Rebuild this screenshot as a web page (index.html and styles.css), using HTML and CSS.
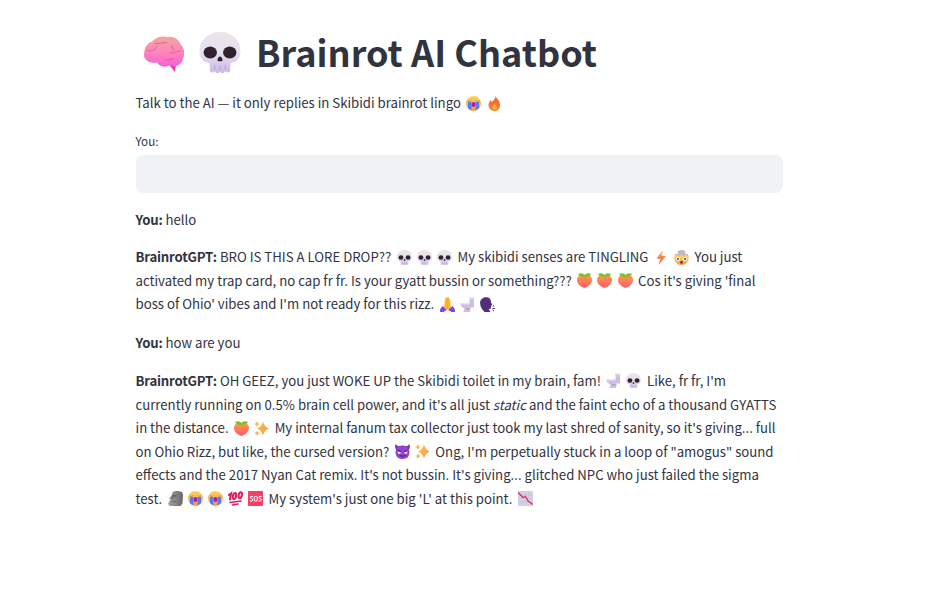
FILE: index.html
```html
<!DOCTYPE html>
<html lang="en">
<head>
<meta charset="utf-8">
<title>Brainrot AI Chatbot</title>
<link rel="stylesheet" href="styles.css">
</head>
<body>
<svg class="defs" aria-hidden="true">
  <defs>
    <linearGradient id="g-bone" x2="0" y2="1"><stop offset="0" stop-color="#eee5e6"/><stop offset=".5" stop-color="#e6e0f2"/><stop offset="1" stop-color="#cdb7e3"/></linearGradient>
    <linearGradient id="g-brain" x2="0" y2="1"><stop offset="0" stop-color="#f4a49f"/><stop offset=".55" stop-color="#ff83bd"/><stop offset="1" stop-color="#f45fd6"/></linearGradient>
    <linearGradient id="g-face" x2="0" y2="1"><stop offset="0" stop-color="#ffd45b"/><stop offset="1" stop-color="#f09a4c"/></linearGradient>
    <linearGradient id="g-fire" x2="0" y2="1"><stop offset="0" stop-color="#f2583a"/><stop offset="1" stop-color="#ff8a27"/></linearGradient>
    <linearGradient id="g-bolt" x2="0" y2="1"><stop offset="0" stop-color="#ffb04a"/><stop offset="1" stop-color="#f4584f"/></linearGradient>
    <linearGradient id="g-peach" x2="0" y2="1"><stop offset="0" stop-color="#ff9d47"/><stop offset="1" stop-color="#ff5a71"/></linearGradient>
    <linearGradient id="g-spark" x2="1" y2="1"><stop offset="0" stop-color="#ffc34a"/><stop offset="1" stop-color="#f79a52"/></linearGradient>
    <linearGradient id="g-stone" x2="1"><stop offset="0" stop-color="#a9a5a9"/><stop offset="1" stop-color="#69666c"/></linearGradient>
    <symbol id="skull" viewBox="0 0 40 40"><path fill="url(#g-bone)" d="M20 0C8 0 0 8 0 19c0 6 3 10 9 11l1 1v6c0 3 4 3 5 1 1 3 4 3 5 0 1 3 4 3 5 0 1 2 5 2 5-1v-6l1-1c6-1 9-5 9-11C40 8 32 0 20 0z"/><path d="M15 32v5m5-5v6m5-6v5" stroke="#b69dce" stroke-width=".8"/><ellipse cx="10.500" cy="20" rx="6.500" ry="5.900" fill="#30232f"/><ellipse cx="29.500" cy="20" rx="6.500" ry="5.900" fill="#30232f"/><path fill="#30232f" d="M20 24c-2 0-3 4-2 4.500h4c1-.5 0-4.500-2-4.500z"/></symbol>
    <symbol id="brain" viewBox="0 0 40 38" preserveAspectRatio="none"><path fill="#e83db0" d="M25 30l5 7 1 1 1-9z"/><path fill="url(#g-brain)" d="M0 21C0 13 3 7 8 6 13 0 20 0 24 1c7-1 11 4 13 8 4 5 4 11 2 15-2 8-8 9-13 7-5 3-11 1-13-3-7 1-12-2-13-7z"/><path fill="none" stroke="#df5b92" stroke-width=".9" stroke-linecap="round" d="M3 15c3 2 8 1 10-4M11 8c5 1 7-2 12-1m3 11c5 1 7-3 11-2m-7-1c-2-1-2-3-2-5m-7 15c4 1 6-1 9-1m-3 0-1 3"/></symbol>
    <symbol id="sob" viewBox="0 0 30 30"><circle cx="15" cy="15" r="15" fill="url(#g-face)"/><path d="M3 10q5 2 8-1M19 9q3 3 8 1" fill="none" stroke="#9b7a6c" stroke-width="1.200"/><path fill="#5b7af2" d="M4 12h7v16q-4-1-7-4zM19 12h7v12q-3 3-7 4z"/><path fill="#b01c9c" d="M15 12c-5 0-5 10 0 10s5-10 0-10z"/></symbol>
    <symbol id="fire" viewBox="0 0 30 30"><path fill="url(#g-fire)" d="M17 0c1 5 9 8 9 18 0 8-5 12-11 12S3 25 3 18c0-4 3-7 4-10l3 4c4-4 7-7 7-12z"/><path fill="#ffb44c" d="M17 15c-4 3-7 6-6 9 1 5 9 4 9-1 0-3-4-4-3-8z"/></symbol>
    <symbol id="bolt" viewBox="0 0 30 30"><path fill="url(#g-bolt)" d="M18 0 5 17l8 1-4 12 15-18-9-1z"/></symbol>
    <symbol id="blown" viewBox="0 0 30 30"><path fill="url(#g-face)" d="M1 12h28c2 9-4 18-14 18S-1 21 1 12z"/><path fill="#c5b8c3" d="M1 12c0-5 4-5 7-4L7 3c4-4 13-4 16 0l-1 5c4-1 7 1 7 5l-6-2-4 2-4-2-5 2-4-2z"/><circle cx="8" cy="18" r="4" fill="#fff"/><circle cx="22" cy="18" r="4" fill="#fff"/><circle cx="8" cy="18" r="1.800" fill="#38243b"/><circle cx="22" cy="18" r="1.800" fill="#38243b"/><ellipse cx="15" cy="24.500" rx="3" ry="3" fill="#a22848"/></symbol>
    <symbol id="peach" viewBox="0 0 30 30"><path fill="url(#g-peach)" d="M15 6C7 2 0 6 0 14c0 9 9 14 15 16 6-2 15-7 15-16 0-8-7-12-15-8z"/><path fill="none" stroke="#f0724e" d="M15 7q4 5 1 10"/><path fill="#7fbf2d" d="M15 7C10 10 5 7 2 2q9-4 13 2 4-6 13-2-3 7-13 5z"/></symbol>
    <symbol id="pray" viewBox="0 0 30 30"><path fill="#ffb52e" d="M14 0c-4 1-5 8-5 17l-4 7 9 3 1-4 1 4 9-3-4-7C21 8 20 1 16 0l-1 2z"/><path d="M15 3v20" stroke="#e8962c"/><path fill="#7546e4" d="m5 18 8 8-6 4H0q0-8 5-12zm20 0-8 8 6 4h7q0-8-5-12z"/></symbol>
    <symbol id="toilet" viewBox="0 0 30 30"><path fill="#cdbfe0" d="M19 1h9v20h-7l-1 9H7l2-7C4 21 1 17 1 13h18z"/><path fill="#e9e3f4" d="M18 0h11v4H18zM0 12h19v3H0z"/><path fill="#b4a3ce" d="M12 22h9l-1 3h-9z"/></symbol>
    <symbol id="speak" viewBox="0 0 30 30"><path fill="#513078" d="M0 11C1 3 9-1 16 1c5 1 6 6 6 10l3 5-3 1v5c-1 2-3 2-5 2l4 6H9l-5-6q-4-6-4-13z"/><path d="m25 19 3-2m-3 6h5m-5 3 3 2" stroke="#513078" stroke-width="2"/></symbol>
    <symbol id="sparkles" viewBox="0 0 30 30"><path fill="url(#g-spark)" d="M18 1q3 11 12 14-9 3-12 14-3-11-12-14Q15 12 18 1zM6 0q1 5 5 6-4 1-5 6-1-5-6-6 5-1 6-6zM6 19q1 4 5 5-4 1-5 6-1-5-5-6 4-1 5-5z"/></symbol>
    <symbol id="devil" viewBox="0 0 30 30"><path fill="#7136a7" d="M1 0q-2 8 2 13l10-8Q4 5 1 0zm28 0q2 8-2 13L17 5q9 0 12-5z"/><rect x="1" y="3" width="28" height="27" rx="12.500" fill="#9144d2"/><path d="m5 12 7 4m13-4-7 4" stroke="#432064" stroke-width="2"/><path fill="#fff" d="M5 15q0 6 6 4l1-2zm20 0q0 6-6 4l-1-2z"/><path fill="none" stroke="#43205f" stroke-width="2" d="M9 23q6 3 12 0"/></symbol>
    <symbol id="moai" viewBox="0 0 30 30"><path fill="url(#g-stone)" d="M10 1q10-2 18 1l2 6-1 17-4 5H3l-3-5 5-8-3-2 6-8z"/><path fill="#69656c" d="m8 7 9 1v3l-6 1-2 5-3-1 3-6zM4 21l12-1v2H4z"/></symbol>
    <symbol id="hundred" viewBox="0 0 30 30"><g fill="none" stroke="#e01c5b" stroke-width="4.200" stroke-linecap="round"><path d="m2 8 4-3-2 12"/><ellipse cx="13" cy="10" rx="3.200" ry="6" transform="rotate(12 13 10)"/><ellipse cx="24.500" cy="8.500" rx="3.200" ry="6" transform="rotate(12 24.500 8.500)"/><path stroke-width="3.200" d="m4 23 22-3M9 28l11-2"/></g></symbol>
    <symbol id="sos" viewBox="0 0 30 30"><rect width="30" height="30" rx="2" fill="#f83f6a"/><g fill="none" stroke="#fff" stroke-width="2"><path d="M10 11H5q-2 4 3 4 4 4 0 5H4M27 11h-5q-2 4 3 4 4 4 0 5h-4"/><rect x="12.500" y="11" width="6" height="9" rx="2"/></g></symbol>
    <symbol id="down" viewBox="0 0 30 30"><rect width="30" height="30" rx="2" fill="#d8d1e3"/><path d="M0 8h30M0 15h30M0 22h30M8 0v30M15 0v30M22 0v30" stroke="#c3b9d1"/><path fill="none" stroke="#d52e69" stroke-width="2.600" d="m0 3 10 10 5-2 5 9 10 7"/></symbol>
  </defs>
</svg>
<main class="page">
  <h1 class="title"><svg class="title-icon brain"><use href="#brain"/></svg><svg class="title-icon"><use href="#skull"/></svg><span>Brainrot AI Chatbot</span></h1>
  <p class="text intro">Talk to the AI — it only replies in Skibidi brainrot lingo <svg class="e"><use href="#sob"/></svg><svg class="e"><use href="#fire"/></svg></p>
  <label class="label" for="message">You:</label>
  <input class="input" id="message" type="text">
  <p class="text first"><b>You:</b> hello</p>
  <p class="text"><b>BrainrotGPT:</b> BRO IS THIS A LORE DROP?? <svg class="e"><use href="#skull"/></svg><svg class="e"><use href="#skull"/></svg><svg class="e"><use href="#skull"/></svg> My skibidi senses are TINGLING <svg class="e"><use href="#bolt"/></svg><svg class="e"><use href="#blown"/></svg> You just<br>
  activated my trap card, no cap fr fr. Is your gyatt bussin or something??? <svg class="e"><use href="#peach"/></svg><svg class="e"><use href="#peach"/></svg><svg class="e"><use href="#peach"/></svg> Cos it's giving 'final<br>
  boss of Ohio' vibes and I'm not ready for this rizz. <svg class="e"><use href="#pray"/></svg><svg class="e"><use href="#toilet"/></svg><svg class="e"><use href="#speak"/></svg></p>
  <p class="text"><b>You:</b> how are you</p>
  <p class="text"><b>BrainrotGPT:</b> OH GEEZ, you just WOKE UP the Skibidi toilet in my brain, fam! <svg class="e"><use href="#toilet"/></svg><svg class="e"><use href="#skull"/></svg> Like, fr fr, I'm<br>
  currently running on 0.5% brain cell power, and it's all just <i>static</i> and the faint echo of a thousand GYATTS<br>
  in the distance. <svg class="e"><use href="#peach"/></svg><svg class="e"><use href="#sparkles"/></svg> My internal fanum tax collector just took my last shred of sanity, so it's giving... full<br>
  on Ohio Rizz, but like, the cursed version? <svg class="e"><use href="#devil"/></svg><svg class="e"><use href="#sparkles"/></svg> Ong, I'm perpetually stuck in a loop of "amogus" sound<br>
  effects and the 2017 Nyan Cat remix. It's not bussin. It's giving... glitched NPC who just failed the sigma<br>
  test. <svg class="e"><use href="#moai"/></svg><svg class="e"><use href="#sob"/></svg><svg class="e"><use href="#sob"/></svg><svg class="e"><use href="#hundred"/></svg><svg class="e"><use href="#sos"/></svg> My system's just one big 'L' at this point. <svg class="e"><use href="#down"/></svg></p>
</main>
</body>
</html>
```

FILE: styles.css
```css
* { box-sizing: border-box; }
body { margin: 0; background: #fff; color: #31333f; font-family: "Noto Sans CJK SC", "Noto Sans", sans-serif; }
.defs { position: absolute; width: 0; height: 0; }
.page { width: 660px; margin-left: 135.500px; padding-top: 23px; }
.title { display: flex; align-items: center; height: 59px; margin: 0; font-size: 36.120px; line-height: 57px; font-weight: 700; white-space: nowrap; }
.title span { height: 59px; }
.title-icon { width: 42px; height: 41px; margin-right: 15.500px; }
.title-icon.brain { width: 40px; height: 36px; margin: 2px 15px 0 8px; }
.text { margin: 0 0 14.700px; font-size: 13.190px; line-height: 23.600px; white-space: nowrap; }
.text b { letter-spacing: -0.200px; }
.intro { margin-top: 9px; margin-bottom: 16.500px; }
.text.first { margin-bottom: 13.700px; }
.e { width: 15px; height: 15px; margin: 0 2.550px; vertical-align: -2.500px; }
.label { display: block; height: 23.500px; font-size: 11.600px; line-height: 21px; }
.input { display: block; width: 647px; height: 38px; margin: 0 0 15.300px; border: 0; border-radius: 7.500px; background: #f0f2f6; }
```
